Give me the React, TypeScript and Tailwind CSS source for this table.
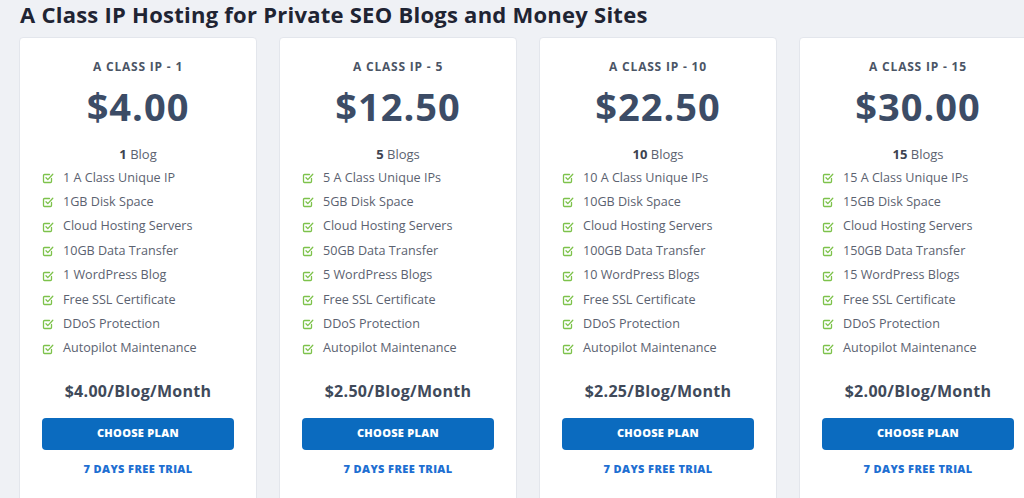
const plans = [
  {
    name: 'A CLASS IP - 1',
    price: '$4.00',
    count: '1',
    unit: 'Blog',
    perBlog: '$4.00/Blog/Month',
    features: ['1 A Class Unique IP', '1GB Disk Space', 'Cloud Hosting Servers', '10GB Data Transfer', '1 WordPress Blog', 'Free SSL Certificate', 'DDoS Protection', 'Autopilot Maintenance'],
  },
  {
    name: 'A CLASS IP - 5',
    price: '$12.50',
    count: '5',
    unit: 'Blogs',
    perBlog: '$2.50/Blog/Month',
    features: ['5 A Class Unique IPs', '5GB Disk Space', 'Cloud Hosting Servers', '50GB Data Transfer', '5 WordPress Blogs', 'Free SSL Certificate', 'DDoS Protection', 'Autopilot Maintenance'],
  },
  {
    name: 'A CLASS IP - 10',
    price: '$22.50',
    count: '10',
    unit: 'Blogs',
    perBlog: '$2.25/Blog/Month',
    features: ['10 A Class Unique IPs', '10GB Disk Space', 'Cloud Hosting Servers', '100GB Data Transfer', '10 WordPress Blogs', 'Free SSL Certificate', 'DDoS Protection', 'Autopilot Maintenance'],
  },
  {
    name: 'A CLASS IP - 15',
    price: '$30.00',
    count: '15',
    unit: 'Blogs',
    perBlog: '$2.00/Blog/Month',
    features: ['15 A Class Unique IPs', '15GB Disk Space', 'Cloud Hosting Servers', '150GB Data Transfer', '15 WordPress Blogs', 'Free SSL Certificate', 'DDoS Protection', 'Autopilot Maintenance'],
  },
];

function CheckSquare() {
  return (
    <svg width="12" height="12" viewBox="0 0 12 12" fill="none" className="shrink-0">
      <path d="M9.5 6.5v3a1 1 0 0 1-1 1h-6a1 1 0 0 1-1-1v-6a1 1 0 0 1 1-1h5" stroke="#7dc24b" strokeWidth="1.3" strokeLinecap="round" strokeLinejoin="round" />
      <path d="M4 5.8l1.8 1.8L10.8 2.3" stroke="#7dc24b" strokeWidth="1.3" strokeLinecap="round" strokeLinejoin="round" />
    </svg>
  );
}

function PlanCard({ plan }: { plan: (typeof plans)[number] }) {
  return (
    <div className="w-[238px] shrink-0 bg-white border border-[#e3e6ec] rounded-[4px] px-[22px] pt-[21px] pb-8 flex flex-col items-center">
      <div className="text-[12px] font-bold tracking-[0.8px] text-[#4b5566] leading-4 font-['Open_Sans',sans-serif]">
        {plan.name}
      </div>
      <div className="mt-[9px] text-[38px] font-bold text-[#3c4c66] leading-[44px] font-['Open_Sans',sans-serif] tracking-[1px]">
        {plan.price}
      </div>
      <div className="mt-[16px] text-[13px] text-[#5b6270] leading-5 font-['Open_Sans',sans-serif]">
        <span className="font-bold text-[#3c4350]">{plan.count}</span> {plan.unit}
      </div>
      <ul className="self-stretch mt-[4px] flex flex-col gap-[4.4px]">
        {plan.features.map((f) => (
          <li key={f} className="flex items-center gap-[9px] h-5 text-[12.6px] text-[#5b6270] font-['Open_Sans',sans-serif]">
            <CheckSquare />
            <span>{f}</span>
          </li>
        ))}
      </ul>
      <div className="mt-[22px] text-[16px] font-bold text-[#404a5a] leading-5 tracking-[0.3px] font-['Open_Sans',sans-serif]">
        {plan.perBlog}
      </div>
      <button className="mt-[17px] w-full h-[32px] rounded-[4px] bg-[#0b6bbf] text-white text-[11px] font-extrabold tracking-[0.3px] font-['Open_Sans',sans-serif]">
        CHOOSE PLAN
      </button>
      <div className="mt-[11px] text-[11px] font-extrabold tracking-[0.4px] text-[#1e6fd2] font-['Open_Sans',sans-serif]">
        7 DAYS FREE TRIAL
      </div>
    </div>
  );
}

export default function App() {
  return (
    <div className="w-[1024px] h-[498px] overflow-hidden bg-[#eff1f5] pl-[19px]">
      <h1 className="pl-px h-[37px] text-[22px] font-bold text-[#1f2433] leading-[28px] tracking-[0.25px] font-['Open_Sans',sans-serif]">
        A Class IP Hosting for Private SEO Blogs and Money Sites
      </h1>
      <div className="flex gap-[22px]">
        {plans.map((p) => (
          <PlanCard key={p.name} plan={p} />
        ))}
      </div>
    </div>
  );
}
